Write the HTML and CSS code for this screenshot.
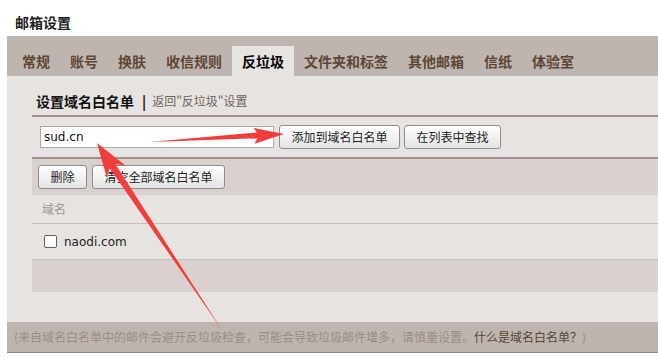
FILE: index.html
```html
<!DOCTYPE html>
<html lang="zh-CN">
<head>
  <meta charset="UTF-8">
  <meta name="viewport" content="width=device-width, initial-scale=1">
  <title>邮箱设置</title>
  <link rel="stylesheet" href="styles.css">
</head>
<body>
  <h1 class="title">邮箱设置</h1>

  <div class="panel">
    <ul class="tabs">
      <li>常规</li>
      <li>账号</li>
      <li>换肤</li>
      <li>收信规则</li>
      <li class="active">反垃圾</li>
      <li>文件夹和标签</li>
      <li>其他邮箱</li>
      <li>信纸</li>
      <li>体验室</li>
    </ul>

    <div class="content">
      <div class="heading">
        <strong>设置域名白名单</strong>
        <span class="sep">|</span>
        <a class="back">返回"反垃圾"设置</a>
      </div>

      <div class="add-row">
        <input type="text" class="domain-input" value="sud.cn">
        <button class="btn">添加到域名白名单</button>
        <button class="btn">在列表中查找</button>
      </div>

      <div class="toolbar">
        <button class="btn">删除</button>
        <button class="btn">清空全部域名白名单</button>
      </div>

      <div class="list-head">域名</div>
      <label class="list-row">
        <input type="checkbox" class="check">
        <span>naodi.com</span>
      </label>
      <div class="list-empty"></div>
    </div>

    <div class="footer">
      (来自域名白名单中的邮件会避开反垃圾检查，可能会导致垃圾邮件增多，请慎重设置。<a class="help">什么是域名白名单？</a>)
    </div>
  </div>

  <!-- annotation arrows drawn over the page -->
  <svg class="marks" width="658" height="360" viewBox="0 0 658 360">
    <polygon points="150,142 257.2,138.3 254.5,143.8 284,134 253.5,128 256.8,132.5" />
    <polygon points="222,330 115.5,164.3 125.1,165.2 97,143 106.8,177.4 109.7,168.2" />
  </svg>
</body>
</html>
```

FILE: styles.css
```css
body {
  margin: 0;
  background: #fff;
  font-family: "Noto Sans CJK SC", sans-serif;
  font-size: 12px;
  color: #333;
  position: relative;
  overflow: hidden;
}
.title {
  margin: 0;
  padding: 12px 0 0 15px;
  height: 24px;
  line-height: 20px;
  font-size: 14px;
  font-weight: bold;
  color: #222;
}
.panel {
  margin-left: 7px;
  width: 651px;
}
.tabs {
  list-style: none;
  margin: 0;
  padding: 10px 0 0 5px;
  height: 30px;
  display: flex;
  background: #bfb5b0;
}
.tabs li {
  padding: 0 10px;
  line-height: 30px;
  font-size: 14px;
  font-weight: bold;
  color: #5e4636;
}
.tabs li.active {
  background: #e7e3e0;
  color: #000;
}
.content {
  background: #e7e3e0;
  padding: 0 0 30px 25px;
}
.heading {
  padding: 15px 0 4px 4px;
  line-height: 20px;
  border-bottom: 2px solid #a08f86;
  display: flex;
  align-items: center;
}
.heading strong {
  font-size: 14px;
  color: #111;
}
.sep {
  font-size: 14px;
  font-weight: bold;
  color: #111;
  margin: 0 6px 0 8px;
}
.back {
  color: #6e6460;
  font-size: 12px;
}
.add-row {
  display: flex;
  align-items: center;
  height: 24px;
  padding: 8px 0 8px 8px;
  border-bottom: 2px solid #a08f86;
}
.domain-input {
  box-sizing: border-box;
  flex: 0 0 234px;
  width: 234px;
  height: 22px;
  margin: 0 5px 0 0;
  padding: 0 3px;
  border: 1px solid #a9a9a9;
  background: #fff;
  font-family: "DejaVu Sans", sans-serif;
  font-size: 12px;
  color: #111;
}
.btn {
  box-sizing: border-box;
  height: 24px;
  padding: 0 11.5px;
  margin-right: 4px;
  border: 1px solid #8d8d8d;
  border-radius: 3px;
  background: linear-gradient(#ffffff, #e4e4e4);
  font-family: "Noto Sans CJK SC", sans-serif;
  font-size: 12px;
  color: #222;
  line-height: 22px;
}
.toolbar {
  display: flex;
  padding: 6px;
  background: #d9d1ce;
}
.toolbar .btn {
  margin-right: 5px;
}
.list-head {
  height: 28px;
  line-height: 28px;
  padding-left: 10px;
  color: #a09892;
  border-bottom: 1px solid #c9c0bb;
}
.list-row {
  display: flex;
  align-items: center;
  height: 35px;
  padding-left: 12px;
  border-bottom: 1px solid #c9c0bb;
  font-family: "DejaVu Sans", sans-serif;
  font-size: 12px;
  color: #222;
}
.check {
  appearance: none;
  box-sizing: border-box;
  width: 13px;
  height: 13px;
  margin: 0 7px 0 0;
  border: 1px solid #5f5f5f;
  border-radius: 2px;
  background: #fff;
}
.list-empty {
  height: 32px;
  background: #d9d1ce;
}
.footer {
  height: 30px;
  line-height: 30px;
  padding-left: 7px;
  background: #bfb5b0;
  border-bottom: 1px solid #8c827c;
  color: #998d86;
  white-space: nowrap;
}
.help {
  color: #574538;
}
.marks {
  position: absolute;
  left: 0;
  top: 0;
  pointer-events: none;
}
.marks polygon {
  fill: #f23d3d;
}
```
